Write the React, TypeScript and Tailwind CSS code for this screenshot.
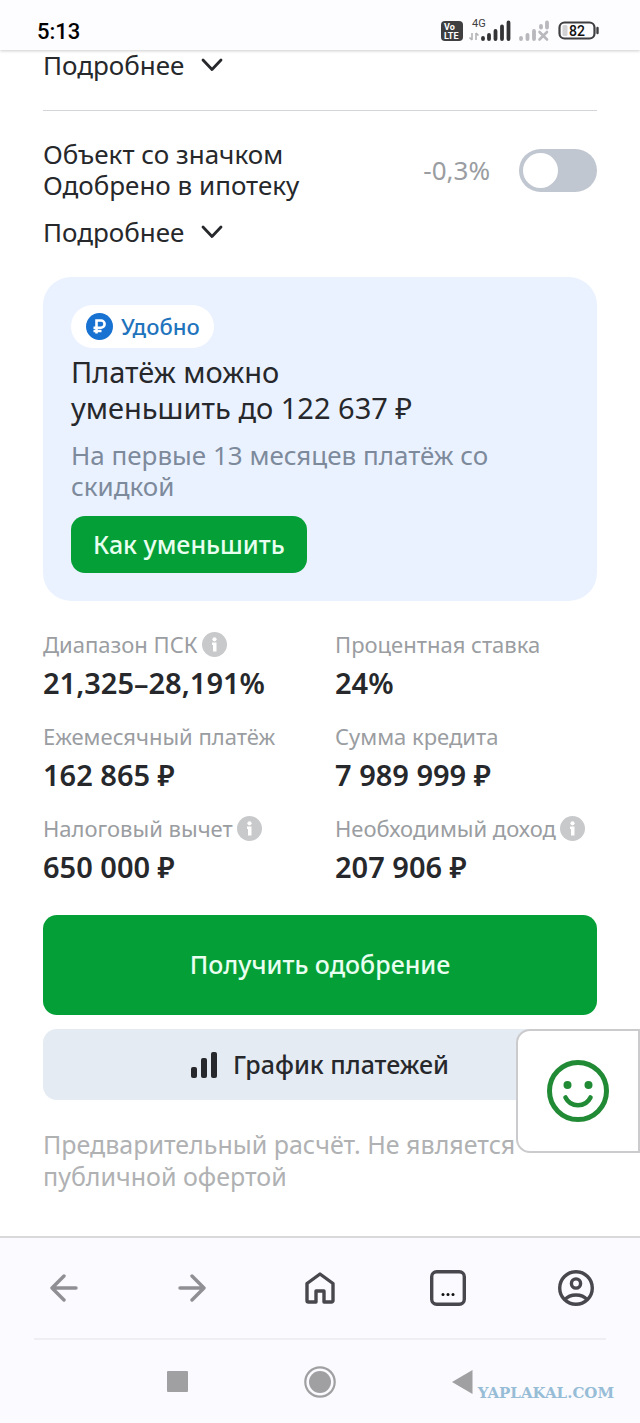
import { ReactNode } from "react";

type Stat = {
  label: string;
  value: string;
  info?: boolean;
};

const stats: Stat[] = [
  { label: "Диапазон ПСК", value: "21,325–28,191%", info: true },
  { label: "Процентная ставка", value: "24%" },
  { label: "Ежемесячный платёж", value: "162 865 ₽" },
  { label: "Сумма кредита", value: "7 989 999 ₽" },
  { label: "Налоговый вычет", value: "650 000 ₽", info: true },
  { label: "Необходимый доход", value: "207 906 ₽", info: true },
];

function StatusIcons() {
  return (
    <div className="flex items-center">
      <svg width="118" height="26" viewBox="0 0 118 26" aria-hidden="true">
        <rect x="1" y="3" width="22" height="20" rx="4" fill="#3f3f42" />
        <text x="4" y="12" fontSize="9" fontWeight="700" fill="#fff" fontFamily="Roboto, sans-serif">
          Vo
        </text>
        <text x="4" y="21" fontSize="9" fontWeight="700" fill="#fff" fontFamily="Roboto, sans-serif">
          LTE
        </text>
        <text x="32" y="9" fontSize="11" fill="#3f3f42" fontFamily="Roboto, sans-serif">
          4G
        </text>
        <g stroke="#b3b3b6" strokeWidth="1.6" fill="none">
          <path d="M32 15v7M29.500 19.500L32 22M36 22v-7M38.500 17.500L36 15" />
        </g>
        <g stroke="#333336" strokeWidth="3.8" strokeLinecap="round">
          <path d="M43 20V21M49 17v4M55.500 13v8M62 8.500v12.500M68.500 4.500V21" />
        </g>
        <g stroke="#b9b9bd" strokeWidth="3.800" strokeLinecap="round">
          <path d="M81 20V21M87.500 17v4M94 13v8M101 8v1.500M107 4.500v5" />
          <path d="M99.500 14l7.500 7.500M107 14l-7.500 7.500" strokeWidth="2.600" />
        </g>
      </svg>
      <svg width="42" height="26" viewBox="0 0 42 26" aria-hidden="true">
        <rect x="1.500" y="4.500" width="35" height="16" rx="5" fill="#fdfcff" stroke="#3f3f42" strokeWidth="2.200" />
        <rect x="4.500" y="7" width="5" height="11" rx="1.500" fill="#d2d2d5" />
        <path d="M39.500 10v5" stroke="#3f3f42" strokeWidth="2.400" strokeLinecap="round" />
        <text x="19" y="17.500" textAnchor="middle" fontSize="14" fontWeight="500" fill="#111" fontFamily="Roboto, sans-serif">
          82
        </text>
      </svg>
    </div>
  );
}

function MoreButton() {
  return (
    <button type="button" className="flex items-center gap-[17px] text-[26px] leading-[30px]">
      Подробнее
      <svg width="22" height="14" viewBox="0 0 22 14" fill="none" aria-hidden="true">
        <path d="M2 2l9 9.500L20 2" stroke="#26282b" strokeWidth="2.800" strokeLinecap="round" strokeLinejoin="round" />
      </svg>
    </button>
  );
}

function InfoIcon() {
  return (
    <svg width="25" height="25" viewBox="0 0 25 25" aria-hidden="true">
      <circle cx="12.500" cy="12.500" r="12.500" fill="#c8c9cb" />
      <circle cx="12.500" cy="7.300" r="2.100" fill="#fff" />
      <path d="M10 10.500h4.500v9h-3.500v-6.500h-1z" fill="#fff" />
    </svg>
  );
}

function RubleBadge() {
  return (
    <svg width="27" height="27" viewBox="0 0 27 27" aria-hidden="true">
      <circle cx="13.500" cy="13.500" r="13.500" fill="#1872d2" />
      <path
        d="M10.500 20.500V7.500h4.500a3.400 3.400 0 0 1 0 7.200H7.500M7.500 18h8"
        stroke="#fff"
        strokeWidth="2.600"
        fill="none"
      />
    </svg>
  );
}

function NavButton({ label, children }: { label: string; children: ReactNode }) {
  return (
    <button type="button" aria-label={label} className="flex flex-1 items-center justify-center">
      {children}
    </button>
  );
}

export default function App() {
  return (
    <div className="min-h-screen bg-white font-['Noto_Sans','Open_Sans',sans-serif] text-[#26282b]">

      <header className="relative flex h-[50px] items-center justify-between bg-[#fdfcff] pt-3 pr-[40px] pl-[37px] shadow-[0_1px_3px_rgba(0,0,0,0.2)]">
        <span className="font-['Roboto',sans-serif] text-[22px] font-medium text-black">5:13</span>
        <StatusIcons />
      </header>

      <main className="px-[43px]">

        <MoreButton />

        <hr className="mt-[30px] border-[#d3d5d8]" />

        <div className="mt-7 flex items-center justify-between">
          <label htmlFor="approved" className="text-[26px] leading-[31px]">
            Объект со значком
            <br />
            Одобрено в ипотеку
          </label>
          <div className="flex items-center gap-[29px]">
            <span className="text-[26px] text-[#9a9da1]">-0,3%</span>
            <input
              id="approved"
              type="checkbox"
              role="switch"
              className="h-[43px] w-[78px] appearance-none rounded-full bg-[#c1c7d1] p-1 before:block before:size-[35px] before:rounded-full before:bg-white checked:bg-[#049f37] checked:before:ml-auto"
            />
          </div>
        </div>

        <div className="mt-4">
          <MoreButton />
        </div>

        <section className="mt-[30px] rounded-[28px] bg-[#ebf2ff] p-7">
          <div className="inline-flex h-[43px] items-center gap-2 rounded-full bg-white pr-[14px] pl-[15px] align-top text-[22px] font-medium text-[#1f74bd]">
            <RubleBadge />
            Удобно
          </div>
          <h2 className="mt-[6px] text-[29px] leading-9">
            Платёж можно
            <br />
            уменьшить до 122 637 ₽
          </h2>
          <p className="mt-[14px] text-[26px] leading-[31px] text-[#7d8a9c]">
            На первые 13 месяцев платёж со
            <br />
            скидкой
          </p>
          <button type="button" className="mt-[14px] block h-[57px] rounded-[14px] bg-[#049f37] px-[22px] text-[25px] font-medium text-[#e9fff0]">
            Как уменьшить
          </button>
        </section>

        <dl className="mt-7 grid grid-cols-2 gap-x-[30px] gap-y-[18px]">
          {stats.map((stat) => (
            <div key={stat.label}>
              <dt className="flex h-[30px] items-center gap-1 text-[22px] whitespace-nowrap text-[#9a9da1]">
                {stat.label}
                {stat.info && <InfoIcon />}
              </dt>
              <dd className="mt-1 text-[29px] leading-10 font-semibold whitespace-nowrap">{stat.value}</dd>
            </div>
          ))}
        </dl>

        <button type="button" className="mt-7 h-[100px] w-full rounded-[14px] bg-[#049f37] text-[25px] font-medium text-[#e9fff0]">
          Получить одобрение
        </button>

        <div className="relative mt-[14px]">
          <button type="button" className="flex h-[71px] w-full items-center justify-center gap-4 rounded-[14px] bg-[#e4ebf3] text-[25px] font-medium">
            <svg width="26" height="26" viewBox="0 0 26 26" aria-hidden="true">
              <rect x="0" y="15" width="6" height="11" rx="2" fill="#26282b" />
              <rect x="10" y="6" width="6" height="20" rx="2" fill="#26282b" />
              <rect x="20" y="0" width="6" height="26" rx="2" fill="#26282b" />
            </svg>
            График платежей
          </button>
          <button
            type="button"
            aria-label="Оценить"
            className="absolute top-0 -right-[43px] flex h-[124px] w-[124px] items-center justify-center rounded-l-[14px] border-2 border-[#cbcbcd] bg-white"
          >
            <svg width="62" height="62" viewBox="0 0 62 62" fill="none" aria-hidden="true">
              <circle cx="31" cy="31" r="28.500" stroke="#218a35" strokeWidth="5" />
              <circle cx="20.500" cy="25" r="4" fill="#218a35" />
              <circle cx="41.500" cy="25" r="4" fill="#218a35" />
              <path d="M18.500 37.500c2.500 5 7 7.800 12.500 7.800s10-2.800 12.500-7.800" stroke="#218a35" strokeWidth="4.600" strokeLinecap="round" />
            </svg>
          </button>
        </div>

        <p className="mt-7 text-[25px] leading-8 text-[#b0b1b3]">
          Предварительный расчёт. Не является
          <br />
          публичной офертой
        </p>

      </main>

      <footer className="mt-11 border-t-2 border-[#d9d9dc] bg-[#fbfaff]">
        <nav className="flex h-[100px] items-center">
          <NavButton label="Назад">
            <svg width="28" height="28" viewBox="0 0 28 28" fill="none" stroke="#8f8f94" strokeWidth="3.400" strokeLinecap="round" strokeLinejoin="round">
              <path d="M26 14H2M14 2L2 14l12 12" />
            </svg>
          </NavButton>
          <NavButton label="Вперёд">
            <svg width="28" height="28" viewBox="0 0 28 28" fill="none" stroke="#8f8f94" strokeWidth="3.400" strokeLinecap="round" strokeLinejoin="round">
              <path d="M2 14h24M14 2l12 12-12 12" />
            </svg>
          </NavButton>
          <NavButton label="Домой">
            <svg width="30" height="32" viewBox="0 0 30 32" fill="none" stroke="#47474d" strokeWidth="3.400" strokeLinejoin="round">
              <path d="M2 11.500L15 2l13 9.500v17a1.500 1.500 0 0 1-1.500 1.500H19V19h-8v11H3.500A1.500 1.500 0 0 1 2 28.500z" />
            </svg>
          </NavButton>
          <NavButton label="Вкладки">
            <svg width="36" height="36" viewBox="0 0 36 36" fill="none">
              <rect x="1.700" y="1.700" width="32.600" height="32.600" rx="5" stroke="#47474d" strokeWidth="3.400" />
              <circle cx="13" cy="24.500" r="1.500" fill="#111" />
              <circle cx="18" cy="24.500" r="1.500" fill="#111" />
              <circle cx="23" cy="24.500" r="1.500" fill="#111" />
            </svg>
          </NavButton>
          <NavButton label="Профиль">
            <svg width="36" height="36" viewBox="0 0 36 36" fill="none" stroke="#47474d" strokeWidth="3.400">
              <circle cx="18" cy="18" r="16.300" />
              <circle cx="18" cy="13.500" r="4.600" />
              <path d="M7 29.500c2.500-3 6.500-4.500 11-4.500s8.500 1.500 11 4.500" />
            </svg>
          </NavButton>
        </nav>

        <div className="relative mx-[34px] flex h-[85px] items-center border-t-2 border-[#efeef2] px-[72px]">
          <NavButton label="Недавние">
            <span className="block size-[21px] rounded-[1px] bg-[#a0a0a2]" />
          </NavButton>
          <NavButton label="Главный экран">
            <svg width="32" height="32" viewBox="0 0 32 32">
              <circle cx="16" cy="16" r="14.700" fill="none" stroke="#a0a0a2" strokeWidth="2.200" />
              <circle cx="16" cy="16" r="11" fill="#a0a0a2" />
            </svg>
          </NavButton>
          <NavButton label="Вернуться">
            <svg width="21" height="24" viewBox="0 0 21 24">
              <path d="M20.500 0v24L0 12z" fill="#a0a0a2" />
            </svg>
          </NavButton>
          <span className="absolute right-[-8px] bottom-[18px] font-['DejaVu_Serif',serif] text-[15px] leading-6 font-bold text-[#97bdd6]">
            YAPLAKAL.COM
          </span>
        </div>
      </footer>

    </div>
  );
}
